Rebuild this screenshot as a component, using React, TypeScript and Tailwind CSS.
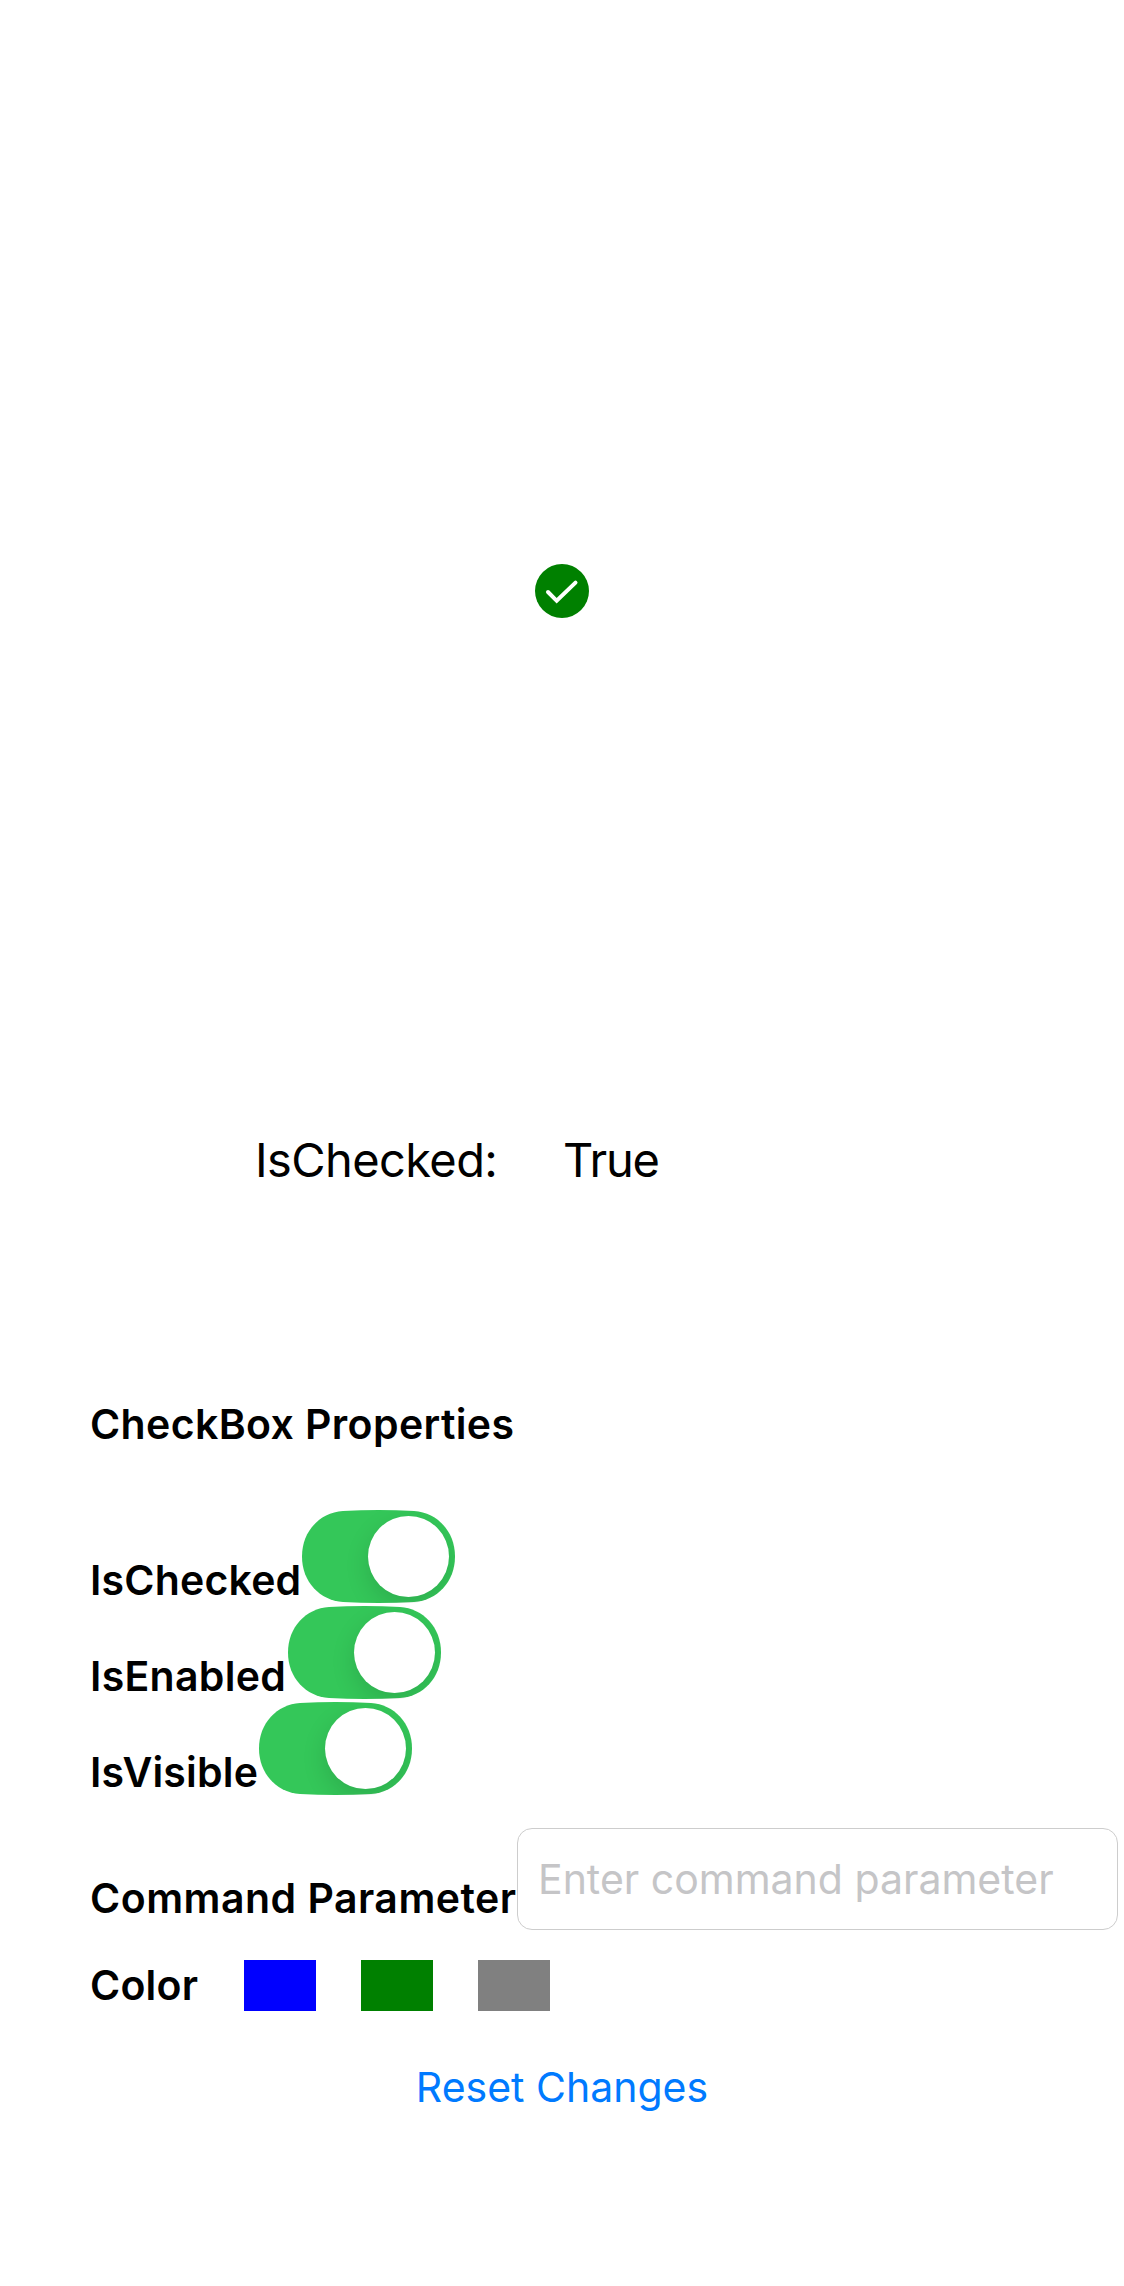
import { useState } from "react";

function Toggle({ label, on, onChange }: { label: string; on: boolean; onChange: (v: boolean) => void }) {
  return (
    <button
      type="button"
      role="switch"
      aria-label={label}
      aria-checked={on}
      onClick={() => onChange(!on)}
      className="relative h-[93px] w-[153px] shrink-0"
    >
      <svg viewBox="0 0 153 93" className="block h-full w-full">
        <path
          d="M0 46.5C0 21 18 2.5 41 1Q76.5 -1 112 1C135 2.5 153 21 153 46.5S135 90.5 112 92Q76.5 94 41 92C18 90.5 0 72 0 46.5Z"
          fill={on ? "#34c759" : "#e9e9ea"}
        />
      </svg>
      <span className="absolute inset-0 overflow-hidden rounded-[46px]">
        <span
          className={`absolute top-[6px] size-[81px] rounded-full bg-white shadow-[0_9px_24px_rgba(0,0,0,0.13)] ${on ? "left-[66px]" : "left-[6px]"}`}
        />
      </span>
    </button>
  );
}

export default function App() {
  const [checked, setChecked] = useState(true);
  const [enabled, setEnabled] = useState(true);
  const [visible, setVisible] = useState(true);
  const [color, setColor] = useState("#008000");

  const reset = () => {
    setChecked(true);
    setEnabled(true);
    setVisible(true);
    setColor("#008000");
  };

  return (
    <div className="flex h-[2286px] w-[1124px] flex-col overflow-hidden bg-white font-['Inter',sans-serif] text-black">
      <div className="flex h-[1131px] items-end justify-center pb-[513px]">
        <button
          type="button"
          disabled={!enabled}
          aria-label="CheckBox"
          onClick={() => setChecked(!checked)}
          className={visible ? "size-[54px]" : "invisible size-[54px]"}
        >
          <svg viewBox="0 0 54 54" className="block size-full">
            <circle cx="27" cy="27" r="27" fill={checked ? color : "white"} />
            {checked && (
              <path
                d="M13 28L21.7 36.8L40.5 18.6"
                fill="none"
                stroke="white"
                strokeWidth="4"
                strokeLinecap="round"
              />
            )}
          </svg>
        </button>
      </div>

      <div className="flex h-[58px] pl-[255px] text-[47px] leading-[58px]">
        <span className="w-[308px] tracking-[-0.6px]">IsChecked:</span>
        <span className="tracking-[-1.2px]">{checked ? "True" : "False"}</span>
      </div>

      <section className="mt-[210px] flex flex-col pl-[90px] text-[41px] leading-[50px] font-semibold">
        <h1 className="h-[50px] tracking-[0.38px]">CheckBox Properties</h1>

        <div className="mt-[61px] flex h-24 items-start">
          <span className="w-[212px] pt-[45px] tracking-[0.2px]">IsChecked</span>
          <Toggle label="IsChecked" on={checked} onChange={setChecked} />
        </div>
        <div className="flex h-24 items-start">
          <span className="w-[198px] pt-[45px] tracking-[0.3px]">IsEnabled</span>
          <Toggle label="IsEnabled" on={enabled} onChange={setEnabled} />
        </div>
        <div className="flex h-24 items-start">
          <span className="w-[169px] pt-[45px] tracking-[0.2px]">IsVisible</span>
          <Toggle label="IsVisible" on={visible} onChange={setVisible} />
        </div>

        <div className="mt-[30px] flex h-[102px] items-start">
          <span className="w-[427px] shrink-0 pt-[45px] tracking-[0.48px] whitespace-nowrap">
            Command Parameter
          </span>
          <input
            placeholder="Enter command parameter"
            className="h-[102px] w-[601px] shrink-0 rounded-[15px] border border-[#cdcdcd] bg-white px-5 font-normal outline-none placeholder:text-[#c5c5c7]"
          />
        </div>

        <div className="mt-[30px] flex h-[51px] items-start">
          <span className="w-[154px] tracking-[0.2px]">Color</span>
          <div className="flex gap-[45px]">
            <button type="button" aria-label="Blue" onClick={() => setColor("#0000ff")} className="h-[51px] w-[72px] bg-[#0000ff]" />
            <button type="button" aria-label="Green" onClick={() => setColor("#008000")} className="h-[51px] w-[72px] bg-[#008000]" />
            <button type="button" aria-label="Gray" onClick={() => setColor("#808080")} className="h-[51px] w-[72px] bg-[#808080]" />
          </div>
        </div>
      </section>

      <button
        type="button"
        onClick={reset}
        className="mt-[51px] self-center text-[41px] leading-[50px] text-[#007aff]"
      >
        Reset Changes
      </button>
    </div>
  );
}
